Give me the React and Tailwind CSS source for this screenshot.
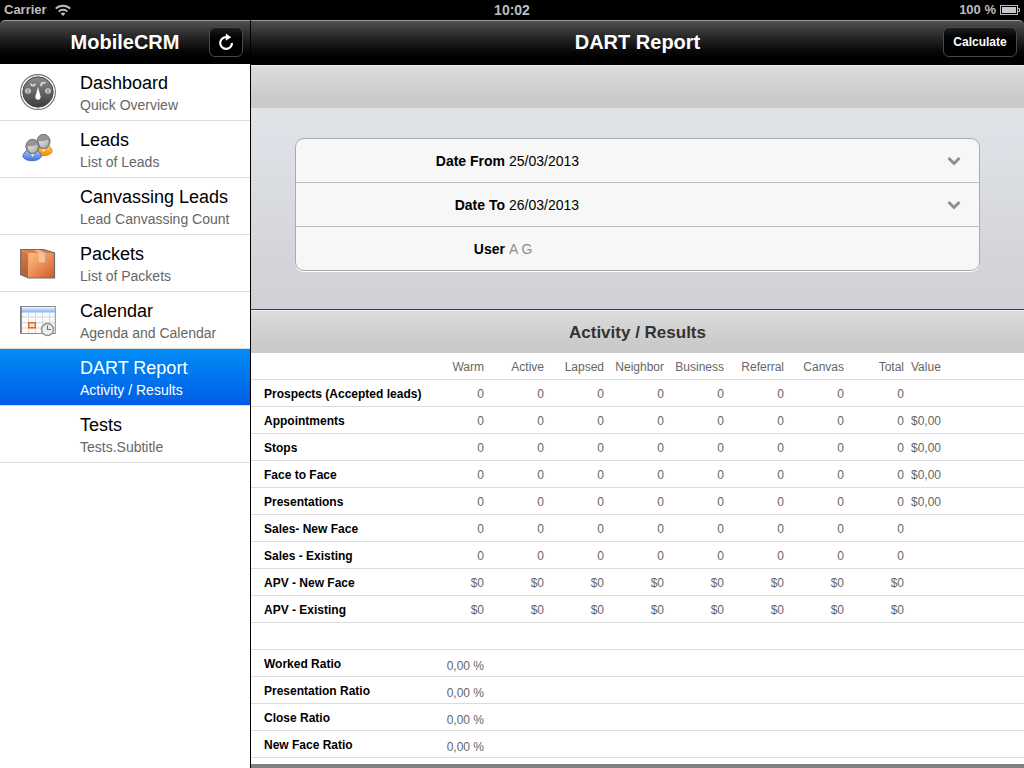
import React from "react";

const BAR = "border-t border-[#9a9a9a] bg-linear-to-b from-[#505050] to-black pb-[2px]";
const BAND =
  "border-t border-[#f0f0f0] bg-linear-to-b from-[#dcdcdc] via-[#cbcbcb] via-75% to-[#cacaca]";
const BUTTON =
  "flex h-[30px] items-center justify-center rounded-[6px] border border-[#484848] bg-linear-to-b from-[#1f1f1f] to-black to-60%";
const ROW = "h-[27px] [&>*]:border-b [&>*]:border-[#dcdcdc]";
const NAME_CELL = "p-0 pt-[2px] pl-[13px] text-left font-bold whitespace-nowrap text-black";

function GaugeIcon() {
  return (
    <svg viewBox="0 0 36 36" className="size-9" aria-hidden="true">
      <defs>
        <linearGradient id="gauge" x1="0" y1="0" x2="0" y2="1">
          <stop offset="0" stopColor="#8d8d8d" />
          <stop offset="1" stopColor="#3c3c3c" />
        </linearGradient>
      </defs>
      <circle cx="18" cy="18" r="17.4" fill="#fff" stroke="#707070" strokeWidth="1.1" />
      <circle cx="18" cy="18" r="15.2" fill="url(#gauge)" stroke="#4a4a4a" strokeWidth="1" />
      <g fill="none" stroke="#d6d6d6" strokeWidth="1.1">
        <circle cx="8" cy="17" r="2.2" />
        <path d="M5.2 17h5.600" />
        <circle cx="28" cy="17" r="2.2" />
        <path d="M25.2 17h5.600" />
        <path d="M11 9.600c.3 2.600 3.600 2.800 4.200.2" strokeWidth="1.9" />
        <path d="M21.300 12.200c-1-2.800 1.500-4.400 4.200-3" strokeWidth="1.9" />
      </g>
      <path d="M18 13l-2.600 9.500a2.600 3.200 0 0 0 5.200 0z" fill="#fff" />
    </svg>
  );
}

function Person({ x, y, body, edge }) {
  return (
    <g transform={`translate(${x} ${y})`}>
      <path
        d="M.8 18C1.200 14 3.500 11.500 6.500 11l4 2 3.500-2c3.200.8 5 3.500 5.200 7-1.700 2.600-5.500 3.700-9.200 3.700S2.500 20.600.8 18z"
        fill={body}
        stroke={edge}
        strokeWidth=".8"
      />
      <path d="M8 13l2.500 5 2.800-5z" fill="#f6f6f6" />
      <ellipse cx="10.500" cy="7.500" rx="6.600" ry="7.200" fill="#959595" stroke="#666" strokeWidth=".9" />
      <path d="M5.700 7.200c3.200.2 6-.2 9.300-1.200.5 1 .5 2 .3 3-.4 2.700-2.300 4.600-4.800 4.600-2.600 0-4.600-2.600-4.800-6.400z" fill="url(#face)" />
    </g>
  );
}

function PeopleIcon() {
  return (
    <svg viewBox="0 0 36 36" className="size-9" aria-hidden="true">
      <defs>
        <linearGradient id="face" x1="0" y1="0" x2="1" y2="1">
          <stop offset="0" stopColor="#e6e6e6" />
          <stop offset="1" stopColor="#a8a8a8" />
        </linearGradient>
        <linearGradient id="blue" x1="0" y1="0" x2="0" y2="1">
          <stop offset="0" stopColor="#a9c6fb" />
          <stop offset="1" stopColor="#3f73dc" />
        </linearGradient>
        <linearGradient id="amber" x1="0" y1="0" x2="0" y2="1">
          <stop offset="0" stopColor="#ffcf5a" />
          <stop offset="1" stopColor="#f98a00" />
        </linearGradient>
      </defs>
      <Person x={13} y={3} body="url(#amber)" edge="#d97a10" />
      <Person x={2} y={8} body="url(#blue)" edge="#3762b8" />
    </svg>
  );
}

function BoxIcon() {
  return (
    <svg viewBox="0 0 36 36" className="size-9" aria-hidden="true">
      <defs>
        <linearGradient id="front" x1="0" y1="0" x2="1" y2="1">
          <stop offset="0" stopColor="#ffc27c" />
          <stop offset="1" stopColor="#d2572c" />
        </linearGradient>
        <linearGradient id="side" x1="0" y1="0" x2="0" y2="1">
          <stop offset="0" stopColor="#d97c4d" />
          <stop offset="1" stopColor="#b35c36" />
        </linearGradient>
      </defs>
      <path d="M.7 4.500L8.500 8v25L.7 29.500z" fill="url(#side)" />
      <path d="M.7 4.500h23L34.500 8h-26z" fill="#d9804f" />
      <path d="M8.500 8h26v25h-26z" fill="url(#front)" />
      <path d="M8.500 33V8" stroke="#f0a26c" strokeWidth=".8" />
      <path d="M13 4.500h6L25 8v9.500h-6.200V8z" fill="#f6d0b4" fillOpacity=".7" />
      <path d="M.7 4.500h23L34.500 8v25h-26L.7 29.500z" fill="none" stroke="#6e6a66" strokeWidth="1.200" />
    </svg>
  );
}

function CalendarIcon() {
  return (
    <svg viewBox="0 0 36 36" className="size-9" aria-hidden="true">
      <defs>
        <linearGradient id="sky" x1="0" y1="0" x2="0" y2="1">
          <stop offset="0" stopColor="#dcebff" />
          <stop offset="1" stopColor="#7fb2f4" />
        </linearGradient>
      </defs>
      <rect x=".7" y="4.500" width="34.600" height="27" fill="#fafafa" stroke="#8b8b8b" />
      <path d="M1 4.500v27" stroke="#707070" strokeWidth="1.500" />
      <rect x="2" y="5.500" width="33" height="5" fill="url(#sky)" />
      <path d="M8.500 11v20M15.500 11v20M22.500 11v20M29.500 11v20M2 15h33M2 20.500h33M2 26h33" stroke="#d3d3d3" strokeWidth=".9" />
      <rect x="8.700" y="20.800" width="6.600" height="5" fill="#ffe3bd" stroke="#d95b0c" strokeWidth="1.300" />
      <circle cx="27.500" cy="27.500" r="6" fill="#ededed" stroke="#929292" strokeWidth="1.500" />
      <path d="M27.500 23.500v4h3.500" fill="none" stroke="#777" strokeWidth="1.200" />
    </svg>
  );
}

const MENU = [
  { title: "Dashboard", sub: "Quick Overview", Icon: GaugeIcon },
  { title: "Leads", sub: "List of Leads", Icon: PeopleIcon },
  { title: "Canvassing Leads", sub: "Lead Canvassing Count" },
  { title: "Packets", sub: "List of Packets", Icon: BoxIcon },
  { title: "Calendar", sub: "Agenda and Calendar", Icon: CalendarIcon },
  { title: "DART Report", sub: "Activity / Results", active: true },
  { title: "Tests", sub: "Tests.Subtitle" },
];

const COLUMNS = ["Warm", "Active", "Lapsed", "Neighbor", "Business", "Referral", "Canvas", "Total"];

const ROWS = [
  { name: "Prospects (Accepted leads)", cell: "0" },
  { name: "Appointments", cell: "0", value: "$0,00" },
  { name: "Stops", cell: "0", value: "$0,00" },
  { name: "Face to Face", cell: "0", value: "$0,00" },
  { name: "Presentations", cell: "0", value: "$0,00" },
  { name: "Sales- New Face", cell: "0" },
  { name: "Sales - Existing", cell: "0" },
  { name: "APV - New Face", cell: "$0" },
  { name: "APV - Existing", cell: "$0" },
];

const RATIOS = ["Worked Ratio", "Presentation Ratio", "Close Ratio", "New Face Ratio"];

function StatusBar() {
  return (
    <div className="grid h-5 grid-cols-[1fr_auto_1fr] items-center bg-black px-1 text-[13px] leading-5 font-bold text-[#bdbdbd]">
      <div className="flex items-center gap-2">
        <span>Carrier</span>
        <svg viewBox="0 0 16 12" className="h-3 w-4" aria-label="Wi-Fi">
          <g fill="none" stroke="#bdbdbd" strokeWidth="2">
            <path d="M.8 4.600a10.400 10.400 0 0 1 14.400 0" />
            <path d="M3.700 7.600a6.200 6.200 0 0 1 8.600 0" />
          </g>
          <path d="M8 12L5.600 9.600a3.400 3.400 0 0 1 4.800 0z" fill="#bdbdbd" />
        </svg>
      </div>
      <span className="text-[14px]">10:02</span>
      <div className="flex items-center justify-end gap-1">
        <span>100 %</span>
        <svg viewBox="0 0 20 10" className="h-[10px] w-5" aria-label="Battery">
          <rect x=".5" y=".5" width="17" height="9" fill="none" stroke="#bdbdbd" />
          <rect x="2" y="2" width="14" height="6" fill="#c8c8c8" />
          <path d="M18 3.500h1.500v3H18" fill="none" stroke="#bdbdbd" />
        </svg>
      </div>
    </div>
  );
}

function Sidebar() {
  return (
    <aside className="flex w-[251px] shrink-0 flex-col border-r border-black bg-white">
      <div className="bg-black">
        <header className={`grid h-11 grid-cols-[1fr_auto_1fr] items-center rounded-tl-[5px] px-[7px] ${BAR}`}>
          <h1 className="col-start-2 text-[20px] leading-6 font-bold text-white">MobileCRM</h1>
          <button type="button" aria-label="Refresh" className={`w-[34px] justify-self-end ${BUTTON}`}>
            <svg viewBox="0 0 18 18" className="size-[18px]" aria-hidden="true">
              <path d="M9.500 4.100A5.900 5.900 0 1 0 15 10" fill="none" stroke="#fff" strokeWidth="2.200" />
              <path d="M8.800.6v7.200l5.400-3.600z" fill="#fff" />
            </svg>
          </button>
        </header>
      </div>
      <nav>
        <ul>
          {MENU.map(({ title, sub, Icon, active }) => (
            <li key={title} className="border-b border-[#dcdcdc]">
              <a
                href="#"
                aria-current={active ? "page" : undefined}
                className={`flex h-14 items-center pl-5 ${active ? "bg-linear-to-b from-[#058cf5] to-[#015de6] text-white" : "text-black"}`}
              >
                <span className="w-[60px] shrink-0">{Icon && <Icon />}</span>
                <span className="flex flex-col pt-[2px]">
                  <span className="text-[18px] leading-6">{title}</span>
                  <span className={`text-[14px] leading-5 ${active ? "text-white" : "text-[#666]"}`}>{sub}</span>
                </span>
              </a>
            </li>
          ))}
        </ul>
      </nav>
    </aside>
  );
}

function DateRow({ id, label, value }) {
  return (
    <div className="relative flex h-11 items-center border-b border-[#bcbdc1]">
      <label htmlFor={id} className="w-[209px] shrink-0 text-right font-bold">
        {label}
      </label>
      <select id={id} defaultValue={value} className="h-full flex-1 appearance-none bg-transparent pl-1 outline-none">
        <option>{value}</option>
      </select>
      <svg viewBox="0 0 14 10" className="pointer-events-none absolute right-[18px] h-[10px] w-[14px]" aria-hidden="true">
        <path d="M1.500 2L7 7.500 12.500 2" fill="none" stroke="#8e8e8e" strokeWidth="2.800" />
      </svg>
    </div>
  );
}

function FilterForm() {
  return (
    <form className="border-b border-[#3c3c3f] bg-linear-to-b from-[#e0e4e9] to-[#d0d0d6] px-11 pt-[30px] pb-[38px]">
      <div className="rounded-[9px] border border-[#a9abb0] bg-[#f7f7f7] text-[14px] leading-5 text-black shadow-[0_1px_0_#fff]">
        <DateRow id="from" label="Date From" value="25/03/2013" />
        <DateRow id="to" label="Date To" value="26/03/2013" />
        <div className="flex h-[43px] items-center">
          <label htmlFor="user" className="w-[209px] shrink-0 text-right font-bold">
            User
          </label>
          <input id="user" type="text" readOnly value="A G" className="h-full min-w-0 flex-1 bg-transparent pl-1 text-[#8c8c8c] outline-none" />
        </div>
      </div>
    </form>
  );
}

function ReportTable() {
  return (
    <table aria-labelledby="report-title" className="w-full table-fixed border-separate border-spacing-0 bg-white text-[12px] leading-4 text-[#666]">
      <colgroup>
        <col className="w-[173px]" />
        {COLUMNS.map((c) => (
          <col key={c} className="w-[60px]" />
        ))}
        <col />
      </colgroup>
      <thead>
        <tr className={ROW}>
          <td className="p-0" />
          {COLUMNS.map((c) => (
            <th key={c} scope="col" className="p-0 pt-[2px] text-right font-normal">
              {c}
            </th>
          ))}
          <th scope="col" className="p-0 pt-[2px] pl-[7px] text-left font-normal">
            Value
          </th>
        </tr>
      </thead>
      <tbody>
        {ROWS.map((r) => (
          <tr key={r.name} className={ROW}>
            <th scope="row" className={NAME_CELL}>
              {r.name}
            </th>
            {COLUMNS.map((c) => (
              <td key={c} className="p-0 pt-[2px] text-right">
                {r.cell}
              </td>
            ))}
            <td className="p-0 pt-[2px] pl-[7px]">{r.value}</td>
          </tr>
        ))}
        <tr className={ROW}>
          <td colSpan={10} className="p-0" />
        </tr>
        {RATIOS.map((name) => (
          <tr key={name} className={ROW}>
            <th scope="row" className={NAME_CELL}>
              {name}
            </th>
            <td className="p-0 pt-[6px] text-right">0,00 %</td>
            <td colSpan={8} className="p-0" />
          </tr>
        ))}
      </tbody>
    </table>
  );
}

export default function App() {
  return (
    <div className="flex min-h-screen flex-col bg-black font-['Liberation_Sans',Arial,sans-serif]">
      <StatusBar />
      <div className="flex flex-1">
        <Sidebar />
        <main className="flex min-w-0 flex-1 flex-col">
          <header className={`grid h-[45px] grid-cols-[1fr_auto_1fr] items-center rounded-tr-[5px] px-[7px] ${BAR}`}>
            <h2 className="col-start-2 text-[20px] leading-6 font-bold text-white">DART Report</h2>
            <button type="button" className={`w-[74px] justify-self-end text-[12px] font-bold text-white ${BUTTON}`}>
              Calculate
            </button>
          </header>
          <div className={`h-[43px] ${BAND}`} />
          <FilterForm />
          <h3 id="report-title" className={`flex h-[43px] items-center justify-center pt-[2px] text-[17px] leading-6 font-bold text-[#333] ${BAND}`}>
            Activity / Results
          </h3>
          <div className="flex-1 border-b-4 border-[#808080] bg-white">
            <ReportTable />
          </div>
        </main>
      </div>
    </div>
  );
}
